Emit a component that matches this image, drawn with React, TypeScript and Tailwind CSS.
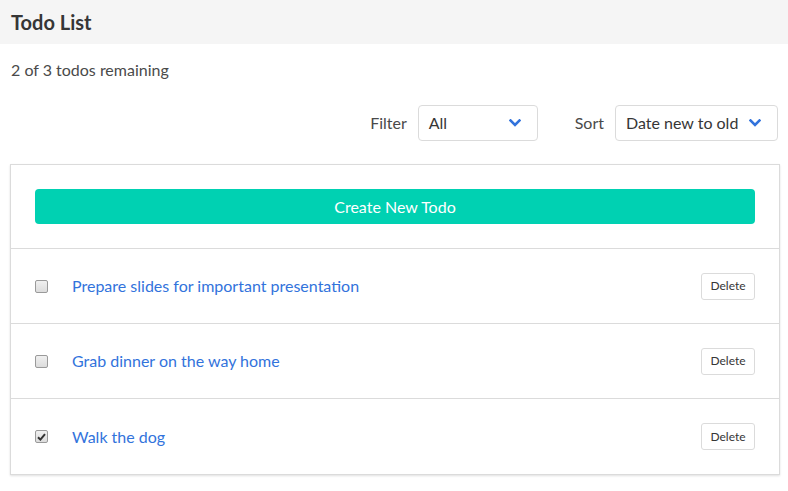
import React from "react";

const font = { fontFamily: "Lato, 'Noto Sans', sans-serif" };

function Chevron() {
  return (
    <svg width="12" height="8" viewBox="0 0 12 8" className="shrink-0">
      <polyline points="1.5,1.5 6,6 10.5,1.5" fill="none" stroke="#3273dc" strokeWidth="2.6" strokeLinecap="square" strokeLinejoin="miter" />
    </svg>
  );
}

function Check({ checked }: { checked: boolean }) {
  return (
    <span className="w-[13px] h-[13px] rounded-[2px] border border-[#9a9a9a] bg-gradient-to-b from-[#f0f0f0] to-[#dcdcdc] flex items-center justify-center shrink-0">
      {checked && (
        <svg width="9" height="8" viewBox="0 0 9 8">
          <path d="M1 4.2 L3.4 6.6 L8 1.2" fill="none" stroke="#333" strokeWidth="2" />
        </svg>
      )}
    </span>
  );
}

const todos = [
  { text: "Prepare slides for important presentation", done: false },
  { text: "Grab dinner on the way home", done: false },
  { text: "Walk the dog", done: true },
];

export default function App() {
  return (
    <div className="w-[788px] h-[491px] bg-white text-[#4a4a4a] text-[16px]" style={font}>
      <div className="h-[44px] bg-[#f5f5f5] flex items-center px-[11px]">
        <h1 className="text-[20px] font-bold text-[#363636]">Todo List</h1>
      </div>
      <div className="px-[11px] pt-[15px] leading-[22px]">2 of 3 todos remaining</div>
      <div className="flex justify-end items-center pr-[10px] mt-[24px] h-[36px]">
        <span className="mr-[11px]">Filter</span>
        <div className="w-[120px] h-[36px] border border-[#dbdbdb] rounded-[4px] flex items-center justify-between pl-[10px] pr-[16px] text-[#363636]">
          <span>All</span>
          <Chevron />
        </div>
        <span className="ml-[37px] mr-[11px]">Sort</span>
        <div className="w-[163px] h-[36px] border border-[#dbdbdb] rounded-[4px] flex items-center justify-between pl-[10px] pr-[16px] text-[#363636]">
          <span>Date new to old</span>
          <Chevron />
        </div>
      </div>
      <div className="mx-[10px] mt-[23px] w-[770px] border border-[#dbdbdb] shadow-[0_1px_2px_rgba(10,10,10,0.12)]">
        <div className="p-[24px] border-b border-[#dbdbdb]">
          <div className="h-[35px] rounded-[4px] bg-[#00d1b2] text-white flex items-center justify-center">
            Create New Todo
          </div>
        </div>
        {todos.map((t, i) => (
          <div
            key={i}
            className={`h-[75px] flex items-center pl-[24px] pr-[24px] ${i < todos.length - 1 ? "border-b border-[#dbdbdb]" : ""}`}
          >
            <Check checked={t.done} />
            <span className="ml-[24px] text-[#3273dc] flex-1">{t.text}</span>
            <div className="w-[54px] h-[27px] border border-[#dbdbdb] rounded-[3px] text-[12px] font-normal text-[#363636] flex items-center justify-center">
              Delete
            </div>
          </div>
        ))}
      </div>
    </div>
  );
}
